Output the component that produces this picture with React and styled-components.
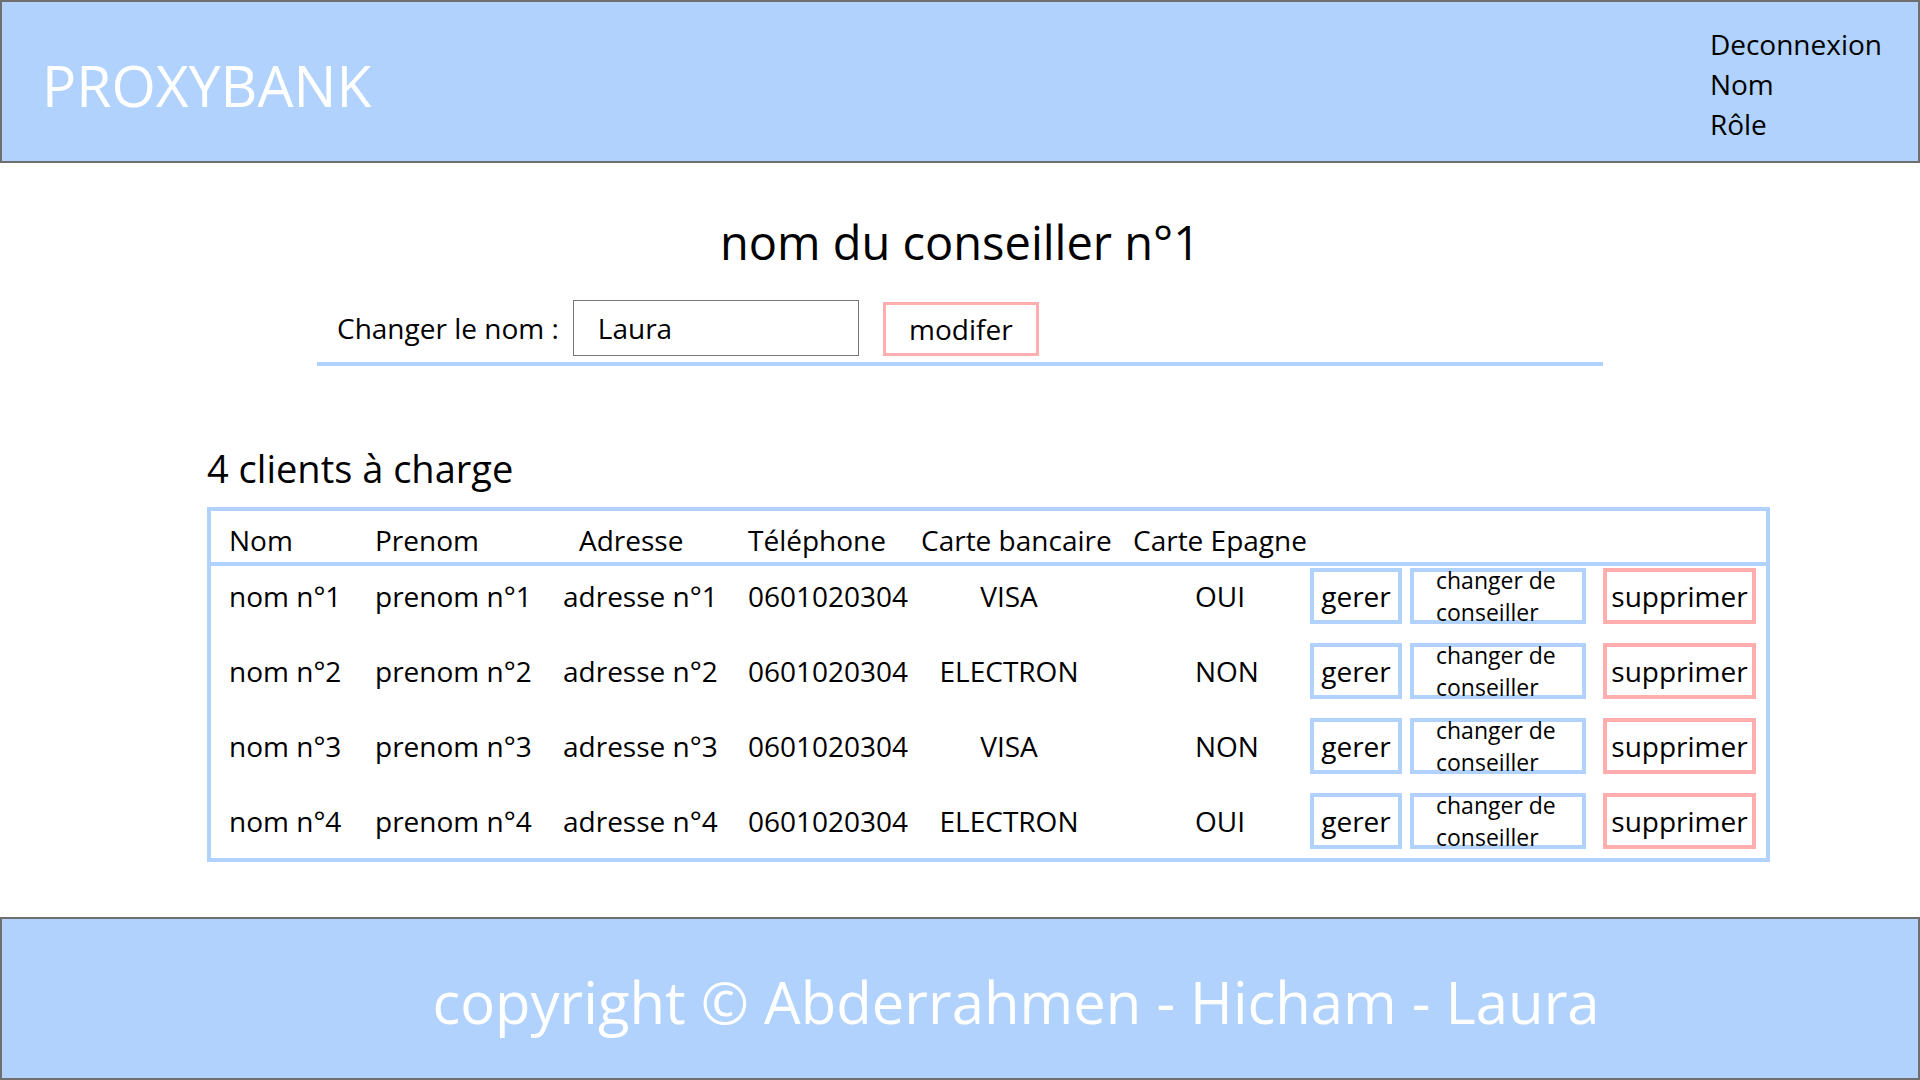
import React from "react";
import styled, { createGlobalStyle } from "styled-components";

const BLUE = "#b0d2fd";
const PINK = "#ffadad";
const EDGE = "#6f6f6f";

const GlobalStyle = createGlobalStyle`
  html, body {
    margin: 0;
    padding: 0;
  }
  body {
    font-family: "Open Sans", "Noto Sans", sans-serif;
    color: #000;
    background: #fff;
  }
  * {
    box-sizing: border-box;
  }
`;

const clients = [
  { nom: "nom n°1", prenom: "prenom n°1", adresse: "adresse n°1", tel: "0601020304", carte: "VISA", epargne: "OUI" },
  { nom: "nom n°2", prenom: "prenom n°2", adresse: "adresse n°2", tel: "0601020304", carte: "ELECTRON", epargne: "NON" },
  { nom: "nom n°3", prenom: "prenom n°3", adresse: "adresse n°3", tel: "0601020304", carte: "VISA", epargne: "NON" },
  { nom: "nom n°4", prenom: "prenom n°4", adresse: "adresse n°4", tel: "0601020304", carte: "ELECTRON", epargne: "OUI" },
];

export default () => {
  return (
    <Page>
      <GlobalStyle />
      <Header>
        <Brand>PROXYBANK</Brand>
        <UserMenu>
          <MenuItem>Deconnexion</MenuItem>
          <MenuItem>Nom</MenuItem>
          <MenuItem>Rôle</MenuItem>
        </UserMenu>
      </Header>

      <Main>
        <Title>nom du conseiller n°1</Title>
        <RenameForm onSubmit={(e) => e.preventDefault()}>
          <Label htmlFor="advisor-name">Changer le nom :</Label>
          <NameInput id="advisor-name" type="text" defaultValue="Laura" />
          <ModifyButton type="submit">modifer</ModifyButton>
        </RenameForm>

        <Clients>
          <SectionTitle>4 clients à charge</SectionTitle>
          <TableBox>
            <HeadRow>
              <span>Nom</span>
              <span>Prenom</span>
              <HeadCell shift={16}>Adresse</HeadCell>
              <span>Téléphone</span>
              <span>Carte bancaire</span>
              <span>Carte Epagne</span>
            </HeadRow>
            <Body>
              {clients.map((c) => (
                <Row key={c.nom}>
                  <span>{c.nom}</span>
                  <span>{c.prenom}</span>
                  <span>{c.adresse}</span>
                  <span>{c.tel}</span>
                  <CardCell>{c.carte}</CardCell>
                  <SavingCell>{c.epargne}</SavingCell>
                  <Actions>
                    <ActionButton width={92}>gerer</ActionButton>
                    <SwitchButton>
                      changer de
                      <br />
                      conseiller
                    </SwitchButton>
                    <ActionButton width={153} danger>
                      supprimer
                    </ActionButton>
                  </Actions>
                </Row>
              ))}
            </Body>
          </TableBox>
        </Clients>
      </Main>

      <Footer>copyright © Abderrahmen - Hicham - Laura</Footer>
    </Page>
  );
};

const Page = styled.div`
  min-height: 100vh;
  display: flex;
  flex-direction: column;
`;

const Header = styled.header`
  height: 163px;
  background: ${BLUE};
  border: 2px solid ${EDGE};
  display: flex;
  justify-content: space-between;
  align-items: flex-start;
  padding: 0 36px 0 40px;
`;

const Brand = styled.div`
  margin-top: 49px;
  font-size: 57px;
  line-height: 1.2;
  color: #fff;
`;

const UserMenu = styled.nav`
  margin-top: 22px;
  display: flex;
  flex-direction: column;
  font-size: 28px;
  line-height: 40px;
`;

const MenuItem = styled.a`
  color: #000;
  cursor: pointer;
`;

const Main = styled.main`
  flex: 1;
  display: flex;
  flex-direction: column;
`;

const Title = styled.h1`
  margin: 49px 0 0;
  text-align: center;
  font-weight: 400;
  font-size: 47px;
  line-height: 60px;
`;

const RenameForm = styled.form`
  width: 1286px;
  margin: 28px auto 0;
  display: flex;
  align-items: flex-end;
  padding: 0 0 6px 20px;
  border-bottom: 4px solid ${BLUE};
  font-size: 28px;
`;

const Label = styled.label`
  align-self: center;
  margin-right: 14px;
`;

const NameInput = styled.input`
  width: 286px;
  height: 56px;
  border: 1px solid #777;
  padding: 0 0 0 24px;
  font: inherit;
  color: #000;
  outline: none;
`;

const ModifyButton = styled.button`
  margin-left: 24px;
  width: 156px;
  height: 54px;
  border: 3px solid ${PINK};
  background: #fff;
  font: inherit;
  color: #000;
  padding: 0;
  cursor: pointer;
`;

const Clients = styled.section`
  margin: 78px 0 0 207px;
  width: 1563px;
`;

const SectionTitle = styled.h2`
  margin: 0 0 15px;
  font-weight: 400;
  font-size: 38px;
  line-height: 48px;
`;

const TableBox = styled.div`
  border: 4px solid ${BLUE};
  font-size: 28px;
`;

const columns = "146px 188px 185px 173px 212px 177px auto";

const HeadRow = styled.div`
  display: grid;
  grid-template-columns: ${columns};
  padding: 12px 0 5px 18px;
  line-height: 34px;
  border-bottom: 4px solid ${BLUE};
`;

const HeadCell = styled.span`
  padding-left: ${(p) => p.shift || 0}px;
`;

const Body = styled.div`
  display: flex;
  flex-direction: column;
  gap: 19px;
  padding: 2px 0 9px;
`;

const Row = styled.div`
  display: grid;
  grid-template-columns: ${columns};
  align-items: center;
  height: 56px;
  padding-left: 18px;
  line-height: 34px;
  white-space: nowrap;
`;

const CardCell = styled.span`
  text-align: center;
  padding-right: 36px;
`;

const SavingCell = styled.span`
  padding-left: 62px;
`;

const Actions = styled.div`
  display: flex;
  align-items: center;
  gap: 8px;
`;

const ActionButton = styled.button`
  width: ${(p) => p.width}px;
  height: 56px;
  margin-left: ${(p) => (p.danger ? 9 : 0)}px;
  border: 4px solid ${(p) => (p.danger ? PINK : BLUE)};
  background: #fff;
  padding: 0;
  font: inherit;
  font-size: 28px;
  color: #000;
  cursor: pointer;
`;

const SwitchButton = styled.button`
  width: 176px;
  height: 56px;
  border: 4px solid ${BLUE};
  background: #fff;
  display: flex;
  align-items: center;
  justify-content: flex-start;
  text-align: left;
  padding: 0 0 0 22px;
  font: inherit;
  font-size: 23px;
  line-height: 32px;
  color: #000;
  overflow: visible;
  cursor: pointer;
`;

const Footer = styled.footer`
  height: 163px;
  background: ${BLUE};
  border: 2px solid ${EDGE};
  display: flex;
  align-items: center;
  justify-content: center;
  padding: 6px 0 0 112px;
  font-size: 58px;
  line-height: 1.2;
  color: #fff;
`;
